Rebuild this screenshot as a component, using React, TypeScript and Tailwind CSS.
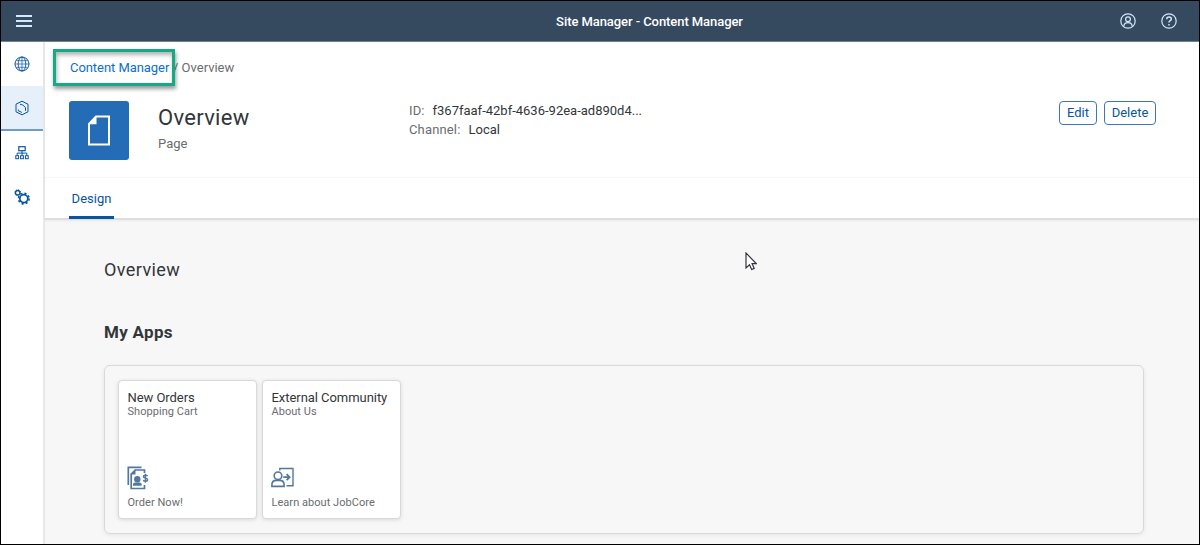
import type { ReactNode } from "react";

function Icon({ size, className, children }: { size: number; className?: string; children: ReactNode }) {
  return (
    <svg
      width={size}
      height={size}
      viewBox={`0 0 ${size} ${size}`}
      fill="none"
      stroke="currentColor"
      strokeWidth="1.2"
      className={className}
    >
      {children}
    </svg>
  );
}

function GlobeIcon() {
  return (
    <Icon size={16}>
      <circle cx="8" cy="8" r="7" strokeWidth="1" />
      <ellipse cx="8" cy="8" rx="3.8" ry="7" strokeWidth="0.9" />
      <path d="M8 1v14M1 8h14M2.2 4.7h11.6M2.2 11.3h11.6" strokeWidth="0.7" />
    </Icon>
  );
}

function ContentIcon() {
  return (
    <Icon size={16}>
      <path d="M8 1.2 14 4.2v7.6l-6 3-6-3V4.2z" strokeLinejoin="round" strokeWidth="1" />
      <path d="M6 4.2 8.8 5 11.5 7.6v3.2M4.3 9.6v1.2l3.6 1.6" strokeWidth="1" />
    </Icon>
  );
}

function OrgIcon() {
  return (
    <Icon size={16}>
      <rect x="4.8" y="1.7" width="6.4" height="4" />
      <path d="M8 5.7v4.6M3.2 10.3V8.1h9.6v2.2" strokeWidth="1" />
      <rect x="1.8" y="10.7" width="2.8" height="3" strokeWidth="1" />
      <rect x="6.6" y="10.7" width="2.8" height="3" strokeWidth="1" />
      <rect x="11.4" y="10.7" width="2.8" height="3" strokeWidth="1" />
    </Icon>
  );
}

function GearsIcon() {
  return (
    <Icon size={16}>
      <circle cx="3.7" cy="3.7" r="2.2" strokeWidth="1.3" />
      <circle cx="3.7" cy="3.7" r="2.9" strokeWidth="0.9" strokeDasharray="1.2 1.08" />
      <circle cx="9.8" cy="9.6" r="4" strokeWidth="1.7" />
      <circle cx="9.8" cy="9.6" r="5.3" strokeWidth="1.6" strokeDasharray="2.1 2.06" />
    </Icon>
  );
}

function NavItem({ active, children }: { active?: boolean; children: ReactNode }) {
  return (
    <a
      className={
        active
          ? "flex h-[45px] items-center justify-center border-b-2 border-[#6f9bcc] bg-[#e5f0fa]"
          : "flex h-[44px] items-center justify-center"
      }
    >
      {children}
    </a>
  );
}

function Tile({ title, subtitle, footer, icon }: { title: string; subtitle: string; footer: string; icon: ReactNode }) {
  return (
    <article className="flex h-[139px] w-[139px] flex-col rounded border border-[#d9d9d9] bg-white pt-[9px] pb-[9px] pl-[8.5px] whitespace-nowrap shadow-[0_1px_4px_rgba(0,0,0,0.12)]">
      <h3 className="text-[13px] leading-[15px] tracking-[-0.05px] text-[#32363a]">{title}</h3>
      <p className="text-[11px] leading-[13px] tracking-[0.04px] text-[#6a6d70]">{subtitle}</p>
      <div className="mt-auto -ml-[0.5px] h-[26px] text-[#53789f]">{icon}</div>
      <p className="mt-1 text-[11px] leading-[13px] tracking-[0.04px] text-[#6a6d70]">{footer}</p>
    </article>
  );
}

function OrdersIcon() {
  return (
    <svg width="22" height="24" viewBox="0 0 22 24" fill="none" stroke="currentColor" strokeWidth="1.7">
      <path d="M1.3 19V1.3H14.5" />
      <path d="M17.5 7V4H8.2L4.2 8v14.5H17.5V19" />
      <path d="M8.5 3.5v5h-5z" fill="currentColor" stroke="none" />
      <circle cx="10.3" cy="13.2" r="3.2" fill="currentColor" stroke="none" />
      <path d="M6 19.8v-1.6q0-1.8 2-1.8h4.6q2 0 2 1.8v1.6z" fill="currentColor" stroke="none" />
      <path d="M20.7 10q-1-.8-2.4-.8-1.9 0-1.9 1.4 0 1.1 2.1 1.5t2.1 1.6q0 1.5-2.2 1.5-1.3 0-2.3-.8M18.4 7.8v8.9" strokeWidth="1.4" />
    </svg>
  );
}

function CommunityIcon() {
  return (
    <svg width="23" height="24" viewBox="0 0 23 24" fill="none" stroke="currentColor" strokeWidth="1.6">
      <path d="M8.8 4.5V2.5H22v17.2h-6.5" strokeWidth="1.4" />
      <circle cx="7" cy="9.8" r="3.8" />
      <path d="M.9 20.4v-1.6q0-4.4 4.4-4.4h3.4q4.4 0 4.4 4.4v1.6z" />
      <path d="M12.2 11.2h6M15.6 8.2l3 3-3 3" strokeWidth="1.8" />
    </svg>
  );
}

export default function App() {
  return (
    <div className="relative flex h-[545px] w-[1200px] flex-col overflow-hidden border border-black bg-[#f7f7f7] font-[Roboto,sans-serif] text-[13px] text-[#32363a]">
      <header className="flex h-[41px] shrink-0 items-center border-b border-[#6f8191] bg-[#354a5f] pr-[22px] pl-[15px] text-[#d1e8ff]">
        <svg width="16" height="12" viewBox="0 0 16 12" fill="currentColor">
          <path d="M0 0h16v2H0zM0 5h16v2H0zM0 10h16v2H0z" />
        </svg>
        <div className="flex-1 pt-px pl-[147px] text-center">
          <h1 className="text-[13px] font-medium tracking-[-0.07px] text-white">Site Manager - Content Manager</h1>
        </div>
        <div className="flex items-center justify-end gap-[25px]">
          <Icon size={16}>
            <circle cx="8" cy="8" r="7.2" />
            <circle cx="8" cy="6.3" r="2.4" />
            <path d="M3.8 13.3Q4 9.6 8 9.6t4.2 3.7" />
          </Icon>
          <Icon size={16}>
            <circle cx="8" cy="8" r="7.2" />
            <path d="M5.7 6.2Q5.7 4 8 4t2.3 2Q10.3 7.2 8.9 7.9 8 8.4 8 9.6M8 11v1.6" strokeWidth="1.5" />
          </Icon>
        </div>
      </header>

      <div className="flex min-h-0 flex-1">
        <nav className="w-11 shrink-0 border-r-2 border-[#e8e8e8] bg-white text-[#0854a0]">
          <NavItem><GlobeIcon /></NavItem>
          <NavItem active><ContentIcon /></NavItem>
          <NavItem><OrgIcon /></NavItem>
          <NavItem><GearsIcon /></NavItem>
        </nav>

        <main className="min-w-0 flex-1">
          <section className="h-[178px] border-b-2 border-[#dedede] bg-white shadow-[0_1px_2px_rgba(0,0,0,0.06)]">
            <div className="flex h-[58px] items-start pt-[7px] pl-2 whitespace-nowrap">
              <div className="z-10 flex h-[37px] w-[122px] shrink-0 items-center border-3 border-[#12ab86] pl-[14px] shadow-[1px_3px_4px_rgba(0,0,0,0.4),inset_1px_3px_4px_rgba(0,0,0,0.3)]">
                <a className="tracking-[-0.06px] text-[#0a6ed1]">Content Manager</a>
              </div>
              <span className="-ml-[2px] flex h-[37px] items-center text-[#6a6d70]">/ Overview</span>
            </div>
            <div className="flex h-[78px] items-start border-b border-[#f7f7f7] pr-[43px] pl-6 whitespace-nowrap">
              <div className="mt-px flex h-[59px] w-[60px] items-center justify-center rounded-[3px] bg-[#246db6] text-white">
                <svg width="24" height="31" viewBox="0 0 24 31" fill="none" stroke="currentColor" strokeWidth="2">
                  <path d="M9 1.5h13v28H2V9z" />
                  <path d="M9.5 1v8.2H1.5z" fill="currentColor" stroke="none" />
                </svg>
              </div>
              <div className="ml-[29px] w-[251px]">
                <h2 className="mt-1 text-[22px] leading-7 tracking-[0.3px]">Overview</h2>
                <p className="mt-[3px] leading-[18px] text-[#6a6d70]">Page</p>
              </div>
              <dl className="leading-[19px]">
                <div className="mt-px flex gap-[8px]">
                  <dt className="tracking-[0.1px] text-[#6a6d70]">ID:</dt>
                  <dd>f367faaf-42bf-4636-92ea-ad890d4...</dd>
                </div>
                <div className="flex gap-[8px]">
                  <dt className="tracking-[0.15px] text-[#6a6d70]">Channel:</dt>
                  <dd>Local</dd>
                </div>
              </dl>
              <div className="mt-px ml-auto flex gap-[7px] text-[#0854a0]">
                <button className="h-6 w-[38px] rounded border border-[#3b78b5] leading-[22px]">Edit</button>
                <button className="h-6 w-[52px] rounded border border-[#3b78b5] leading-[22px]">Delete</button>
              </div>
            </div>
            <div className="flex h-[40px] pl-6">
              <a className="h-[41px] w-[45px] border-b-3 border-[#0854a0] pt-[11px] text-center leading-5 text-[#0854a0]">Design</a>
            </div>
          </section>

          <section className="px-[59px] pt-[38px]">
            <h2 className="text-[18px] leading-6 tracking-[0.4px]">Overview</h2>
            <h3 className="mt-[38px] text-[17px] leading-6 font-bold tracking-[0.3px]">My Apps</h3>
            <div className="mt-[21px] flex h-[169px] w-[1040px] gap-[5px] rounded-md border border-[#d9d9d9] py-[14px] pl-[13px] shadow-[0_1px_4px_rgba(0,0,0,0.08)]">
              <Tile title="New Orders" subtitle="Shopping Cart" footer="Order Now!" icon={<OrdersIcon />} />
              <Tile title="External Community" subtitle="About Us" footer="Learn about JobCore" icon={<CommunityIcon />} />
            </div>
          </section>
        </main>
      </div>

      <svg className="absolute top-[251px] left-[744px]" width="12" height="19" viewBox="0 0 12 19" fill="white" stroke="#33333f" strokeWidth="1.2">
        <path d="M1 1v15l3.5-3.2 2.2 4.7 2.5-1.1-2.1-4.7h4.2z" />
      </svg>
    </div>
  );
}
